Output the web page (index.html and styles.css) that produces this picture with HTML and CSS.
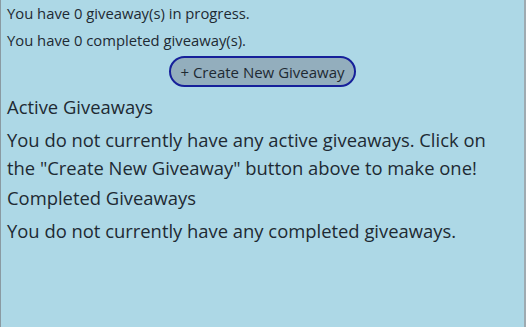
FILE: index.html
```html
<!DOCTYPE html>
<html>
<head>
<meta charset="utf-8">
<link rel="stylesheet" href="styles.css">
</head>
<body>
<div class="page">
  <p class="status">You have 0 giveaway(s) in progress.</p>
  <p class="status">You have 0 completed giveaway(s).</p>
  <div class="actions">
    <button class="create">+ Create New Giveaway</button>
  </div>
  <h2 class="heading">Active Giveaways</h2>
  <p class="message">You do not currently have any active giveaways. Click on the "Create New Giveaway" button above to make one!</p>
  <h2 class="heading">Completed Giveaways</h2>
  <p class="message">You do not currently have any completed giveaways.</p>
</div>
</body>
</html>
```
FILE: styles.css
```css
html, body {
  margin: 0;
  padding: 0;
  height: 100%;
}
body {
  background: #add8e6;
  font-family: "Open Sans", "Noto Sans", sans-serif;
  color: #1e2a33;
}
.page {
  box-sizing: border-box;
  height: 100%;
  border-left: 1px solid #8a9aa2;
  border-right: 2px solid #9eaab0;
  padding: 0 6px;
}
.status {
  margin: 0;
  font-size: 14.8px;
  line-height: 27px;
}
.actions {
  display: flex;
  justify-content: center;
  margin-top: 2px;
  margin-bottom: 7px;
}
.create {
  font-family: inherit;
  font-size: 15px;
  color: #1e2a33;
  background: #93aebd;
  border: 2px solid #16209a;
  border-radius: 16px;
  height: 31px;
  padding: 0 9px;
}
.heading {
  margin: 3px 0 0 0;
  font-weight: normal;
  font-size: 18.4px;
  line-height: 26px;
}
.message {
  margin: 6px 0 0 0;
  font-size: 18.4px;
  line-height: 28px;
}
```
